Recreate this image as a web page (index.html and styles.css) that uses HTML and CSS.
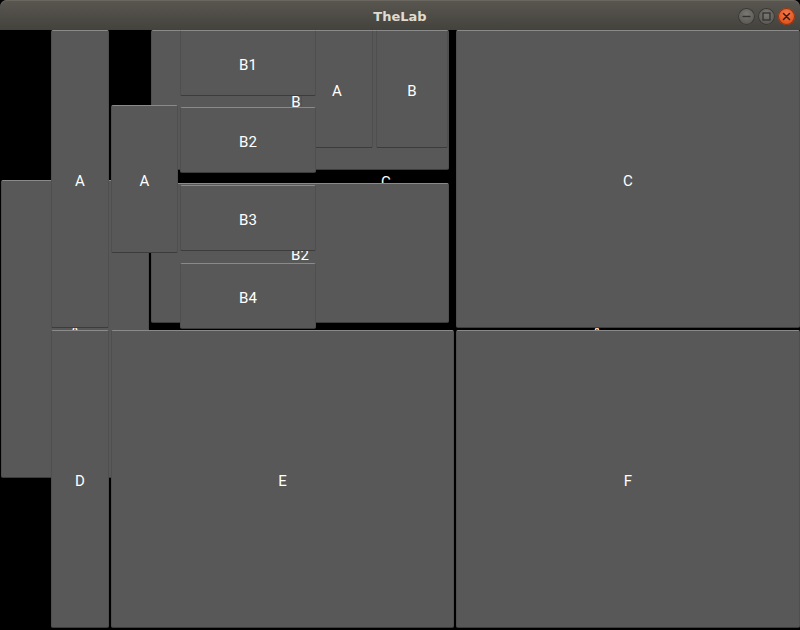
FILE: index.html
```html
<!DOCTYPE html>
<html>
<head>
<meta charset="utf-8">
<title>TheLab</title>
<link rel="stylesheet" href="styles.css">
</head>
<body>
<div class="window">
  <header class="titlebar">
    <div class="title">TheLab</div>
    <div class="controls">
      <span class="ctl ctl-min"><svg width="17" height="17" viewBox="0 0 17 17"><line x1="4.5" y1="8.5" x2="12.5" y2="8.5" stroke="#33322f" stroke-width="1.4"/></svg></span>
      <span class="ctl ctl-max"><svg width="17" height="17" viewBox="0 0 17 17"><rect x="5" y="5" width="7" height="7" fill="none" stroke="#33322f" stroke-width="1.3"/></svg></span>
      <span class="ctl ctl-close"><svg width="17" height="17" viewBox="0 0 17 17"><path d="M5.5 5.5 L11.5 11.5 M11.5 5.5 L5.5 11.5" stroke="#3a1a0e" stroke-width="1.5" stroke-linecap="round"/></svg></span>
    </div>
  </header>
  <main class="canvas">
    <span class="lbl lbl-c">C</span>
    <span class="lbl lbl-hidden">A</span>
    <div class="btn r-left"><span>A</span></div>
    <div class="btn r-upper"></div>
    <span class="lbl lbl-b">B</span>
    <div class="btn r-lower"><span>B2</span></div>
    <div class="btn r-colA"><span>A</span></div>
    <div class="btn r-D"><span>D</span></div>
    <div class="btn r-A2"><span>A</span></div>
    <div class="btn r-E"><span>E</span></div>
    <div class="btn r-C"><span>C</span></div>
    <div class="btn r-F"><span>F</span></div>
    <div class="btn r-btnA"><span>A</span></div>
    <div class="btn r-btnB"><span>B</span></div>
    <div class="btn r-b1"><span>B1</span></div>
    <div class="btn r-b2"><span>B2</span></div>
    <div class="btn r-b3"><span>B3</span></div>
    <div class="btn r-b4"><span>B4</span></div>
  </main>
</div>
</body>
</html>
```

FILE: styles.css
```css
html, body {
  margin: 0;
  padding: 0;
  background: #000;
}
body {
  width: 800px;
  height: 630px;
  overflow: hidden;
  font-family: Roboto, "Liberation Sans", sans-serif;
}
.window {
  width: 800px;
  height: 630px;
  display: flex;
  flex-direction: column;
}
.titlebar {
  height: 30px;
  flex: none;
  display: grid;
  grid-template-columns: 1fr auto 1fr;
  align-items: center;
  background: linear-gradient(#5a5751, #44423d);
  border-radius: 7px 7px 0 0;
  box-shadow: inset 0 1px 0 #6a6760;
}
.title {
  grid-column: 2;
  font-family: "DejaVu Sans", sans-serif;
  font-weight: bold;
  font-size: 13px;
  color: #dfdbd2;
  margin-top: 3px;
}
.controls {
  grid-column: 3;
  justify-self: end;
  display: flex;
  gap: 3px;
  margin-right: 5px;
  margin-top: 3px;
}
.ctl {
  width: 17px;
  height: 17px;
  border-radius: 50%;
  display: block;
  box-sizing: border-box;
}
.ctl svg { display: block; }
.ctl-min, .ctl-max {
  background: radial-gradient(circle at 50% 35%, #7a7873, #5c5a55 70%);
  box-shadow: 0 0 0 1px #393834 inset;
}
.ctl-close {
  background: radial-gradient(circle at 50% 35%, #f27a4c, #e0521e 70%);
  box-shadow: 0 0 0 1px #8a3413 inset;
}
.canvas {
  position: relative;
  height: 600px;
  background: #000;
  overflow: hidden;
}
.btn {
  position: absolute;
  box-sizing: border-box;
  background: #585858;
  border-top: 1px solid #8a8a8a;
  border-bottom: 1px solid #3c3c3c;
  border-left: 1px solid #4f4f4f;
  border-right: 1px solid #4f4f4f;
  border-radius: 2px;
  display: flex;
  align-items: center;
  justify-content: center;
  padding-top: 3px;
  color: #fff;
  font-size: 15px;
}
.lbl {
  position: absolute;
  color: #fff;
  font-size: 15px;
  transform: translate(-50%, -50%);
  margin-top: 1.5px;
}
.lbl-c { left: 386px; top: 150px; }
.lbl-b { left: 296px; top: 70px; }
.lbl-hidden { left: 597px; top: 300px; }

.r-left  { left: 1px;   top: 150px; width: 148px; height: 298px; }
.r-upper { left: 151px; top: 0;     width: 298px; height: 140px; }
.r-lower { left: 151px; top: 153px; width: 298px; height: 140px; }
.r-colA  { left: 51px;  top: 0;     width: 58px;  height: 298px; }
.r-D     { left: 51px;  top: 300px; width: 58px;  height: 298px; }
.r-A2    { left: 111px; top: 75px;  width: 67px;  height: 148px; }
.r-E     { left: 111px; top: 300px; width: 343px; height: 298px; }
.r-C     { left: 456px; top: 0;     width: 344px; height: 298px; }
.r-F     { left: 456px; top: 300px; width: 344px; height: 298px; }
.r-btnA  { left: 301px; top: 0;     width: 72px;  height: 118px; }
.r-btnB  { left: 376px; top: 0;     width: 72px;  height: 118px; }
.r-b1    { left: 180px; top: 0;     width: 136px; height: 66px; }
.r-b2    { left: 180px; top: 77px;  width: 136px; height: 66px; }
.r-b3    { left: 180px; top: 155px; width: 136px; height: 66px; }
.r-b4    { left: 180px; top: 233px; width: 136px; height: 66px; }
```
